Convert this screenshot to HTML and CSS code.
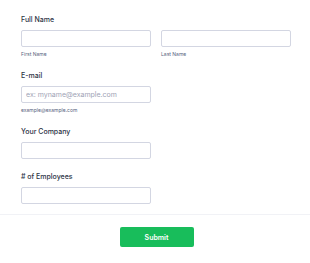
FILE: index.html
```html
<!DOCTYPE html>
<html lang="en">
<head>
    <meta charset="UTF-8">
    <meta name="viewport" content="width=device-width, initial-scale=1.0">
    <title>Form</title>
    <link rel="stylesheet" href="styles.css">
</head>
<body>
    <form class="form">
        <div class="field">
            <label class="label">Full Name</label>
            <div class="row">
                <div class="sub">
                    <input type="text" class="input">
                    <span class="hint">First Name</span>
                </div>
                <div class="sub">
                    <input type="text" class="input">
                    <span class="hint">Last Name</span>
                </div>
            </div>
        </div>
        <div class="field">
            <label class="label">E-mail</label>
            <div class="sub">
                <input type="email" class="input" placeholder="ex: myname@example.com">
                <span class="hint">example@example.com</span>
            </div>
        </div>
        <div class="field">
            <label class="label">Your Company</label>
            <input type="text" class="input">
        </div>
        <div class="field last">
            <label class="label">&#35; of Employees</label>
            <input type="text" class="input">
        </div>
        <div class="actions">
            <button type="submit" class="submit">Submit</button>
        </div>
    </form>
</body>
</html>
```
FILE: styles.css
```css
body {
    margin: 0;
    padding: 0;
    background-color: #ffffff;
    font-family: Inter, "Liberation Sans", sans-serif;
    color: #2c3345;
}
.form {
    padding-top: 15px;
}
.field {
    padding: 0 21px;
    margin-bottom: 13px;
}
.field.last {
    margin-bottom: 10px;
}
.label {
    display: block;
    font-size: 7px;
    font-weight: 500;
    line-height: 10px;
    margin-bottom: 5px;
}
.row {
    display: flex;
    gap: 10px;
}
.sub {
    display: flex;
    flex-direction: column;
}
.input {
    display: block;
    box-sizing: border-box;
    width: 130px;
    height: 17px;
    margin: 0;
    padding: 0 4px;
    border: 1px solid #d3d6e2;
    border-radius: 2px;
    font-family: Inter, "Liberation Sans", sans-serif;
    font-size: 7px;
    color: #2c3345;
}
.input::placeholder {
    color: #9ea3b5;
}
.hint {
    font-size: 5px;
    line-height: 8px;
    margin-top: 3px;
    color: #57647e;
}
.actions {
    border-top: 1px solid #f1f2f6;
    display: flex;
    justify-content: center;
    padding: 12px 0 0 3px;
}
.submit {
    width: 74px;
    height: 20px;
    border: none;
    border-radius: 2px;
    background-color: #18bd5b;
    color: #ffffff;
    font-family: Inter, "Liberation Sans", sans-serif;
    font-size: 7px;
    font-weight: 600;
    cursor: pointer;
}
```
